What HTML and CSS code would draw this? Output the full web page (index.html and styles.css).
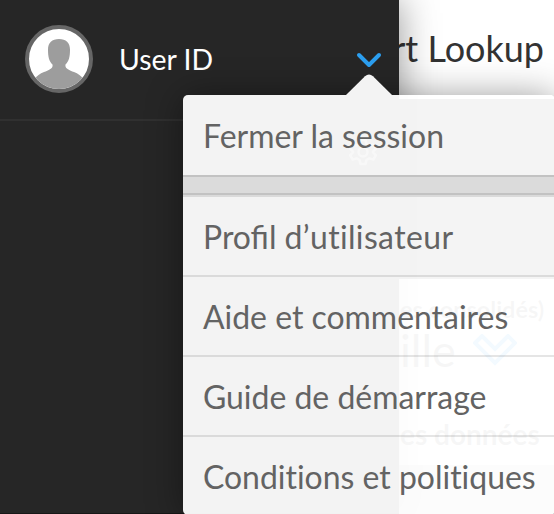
FILE: index.html
```html
<!DOCTYPE html>
<html lang="fr">
<head>
<meta charset="utf-8">
<title>User menu</title>
<link rel="stylesheet" href="styles.css">
</head>
<body>
<div class="app">
  <aside class="sidebar">
    <header class="account">
      <svg class="avatar" viewBox="0 0 68 68">
        <defs><clipPath id="face"><circle cx="34" cy="34" r="30"/></clipPath></defs>
        <circle cx="34" cy="34" r="32" fill="#fff" stroke="#666" stroke-width="4"/>
        <path clip-path="url(#face)" fill="#9d9d9d" d="M34 14c-7 0-11 4-11 10.500C23 32 24 36 27.500 39.500c.8 4-3.500 5.500-8.500 7.500-4 1.600-7.500 4-9 7v14h48V54c-1.500-3-5-5.400-9-7-5-2-9.300-3.500-8.500-7.500C44 36 45 32 45 24.500 45 18 41 14 34 14z"/>
      </svg>
      <span class="name">User ID</span>
      <svg class="chevron" viewBox="0 0 26 16"><path d="M3 3l10 10L23 3"/></svg>
    </header>
    <div class="tools">
      <svg class="gear" viewBox="0 0 28 28"><path d="M11.500 2h5l1 4 3 1.600 3.800-1.200 2.500 4.200-3 3.400 3 3.400-2.500 4.200-3.800-1.200-3 1.600-1 4h-5l-1-4-3-1.600-3.800 1.200-2.500-4.200 3-3.400-3-3.400 2.500-4.200 3.800 1.200 3-1.600z"/><circle cx="14" cy="14" r="4.500"/></svg>
    </div>
  </aside>
  <main class="content">
    <header class="title"><span>rt Lookup</span></header>
    <div class="band"></div>
    <section class="card">
      <p class="note">es consolidés)</p>
      <p class="metric">ille <svg viewBox="0 0 44 32"><path d="M2 9l7-7 13 13L35 2l7 7-20 20z"/></svg></p>
      <p class="data">es données</p>
    </section>
  </main>
  <nav class="menu">
    <svg class="arrow" viewBox="0 0 46 21"><path d="M0 21L19 2.300Q23-1.300 27 2.300L46 21z"/></svg>
    <a class="item first"><span>Fermer la session</span></a>
    <div class="divider"></div>
    <a class="item"><span>Profil <span class="plain spaced">d’utilisateur</span></span></a>
    <a class="item"><span>Aide et commentaires</span></a>
    <a class="item"><span>Guide de démarrage</span></a>
    <a class="item last"><span class="plain">Conditions et politiques</span></a>
  </nav>
</div>
</body>
</html>
```
FILE: styles.css
```css
* { box-sizing: border-box; }
body { margin: 0; overflow: hidden; font-family: Lato, sans-serif; }
.app { position: relative; display: grid; grid-template-columns: 399px 1fr; width: 554px; height: 514px; overflow: hidden; background: #fff; }
.sidebar { position: relative; z-index: 1; background: #262626; border-bottom: 1px solid #171717; box-shadow: 0 0 36px rgba(0,0,0,.42); }
.account { display: flex; align-items: center; height: 121px; padding: 0 17px 1px 25px; border-bottom: 2px solid #303030; }
.avatar { width: 68px; height: 68px; flex: none; }
.name { flex: 1; margin-left: 26px; color: #fff; font-size: 28.4px; line-height: 36px; white-space: nowrap; }
.chevron { width: 26px; height: 16px; margin-top: 2px; fill: none; stroke: #2c9ff0; stroke-width: 4; stroke-linecap: round; stroke-linejoin: round; }
.tools { display: flex; justify-content: flex-end; padding: 17px 22px 0 0; }
.gear { width: 28px; height: 28px; fill: none; stroke: #888; stroke-width: 2.5; stroke-linejoin: round; }
.content { min-width: 0; overflow: hidden; background: #c4c4c4; }
.title { display: flex; align-items: center; justify-content: flex-end; height: 99px; padding: 0 10px 3px 0; background: #fff; color: #333; font-size: 36px; line-height: 44px; white-space: nowrap; }
.band { height: 180px; background: #383838; }
.card { height: 186px; padding-left: 1px; overflow: hidden; background: #fff; color: #666; }
.card p { margin: 0; white-space: nowrap; }
.note { padding-top: 15px; font-size: 23.5px; line-height: 30px; font-weight: 700; }
.metric { display: flex; align-items: center; gap: 17px; height: 52px; font-size: 45px; line-height: 52px; }
.metric svg { width: 44px; height: 32px; fill: none; stroke: #2c9ff0; stroke-width: 4; }
.data { padding-top: 42px; font-size: 28px; line-height: 32px; font-weight: 700; }
.menu { position: absolute; z-index: 2; left: 183px; top: 95px; width: 372px; height: 420px; border-radius: 5px; background: rgba(255,255,255,.945); box-shadow: 0 2px 36px rgba(0,0,0,.42); }
.arrow { position: absolute; left: 163px; top: -21px; width: 46px; height: 21px; fill: #f3f3f3; }
.item { display: flex; align-items: center; height: 80px; padding: 2px 20px 0; border-bottom: 2px solid rgba(0,0,0,.1); color: #636363; font-size: 31.95px; line-height: 42px; white-space: nowrap; }
.first { border: 0; padding-bottom: 0; }
.divider { height: 22px; border-top: 2px solid #c2c2c2; border-bottom: 2px solid #dadada; background: linear-gradient(#dbdbdb 16px, #c2c2c2 16px); }
.last { height: 78px; border: 0; }
.plain { font-variant-ligatures: none; }
.spaced { font-kerning: none; letter-spacing: .35px; }
```
